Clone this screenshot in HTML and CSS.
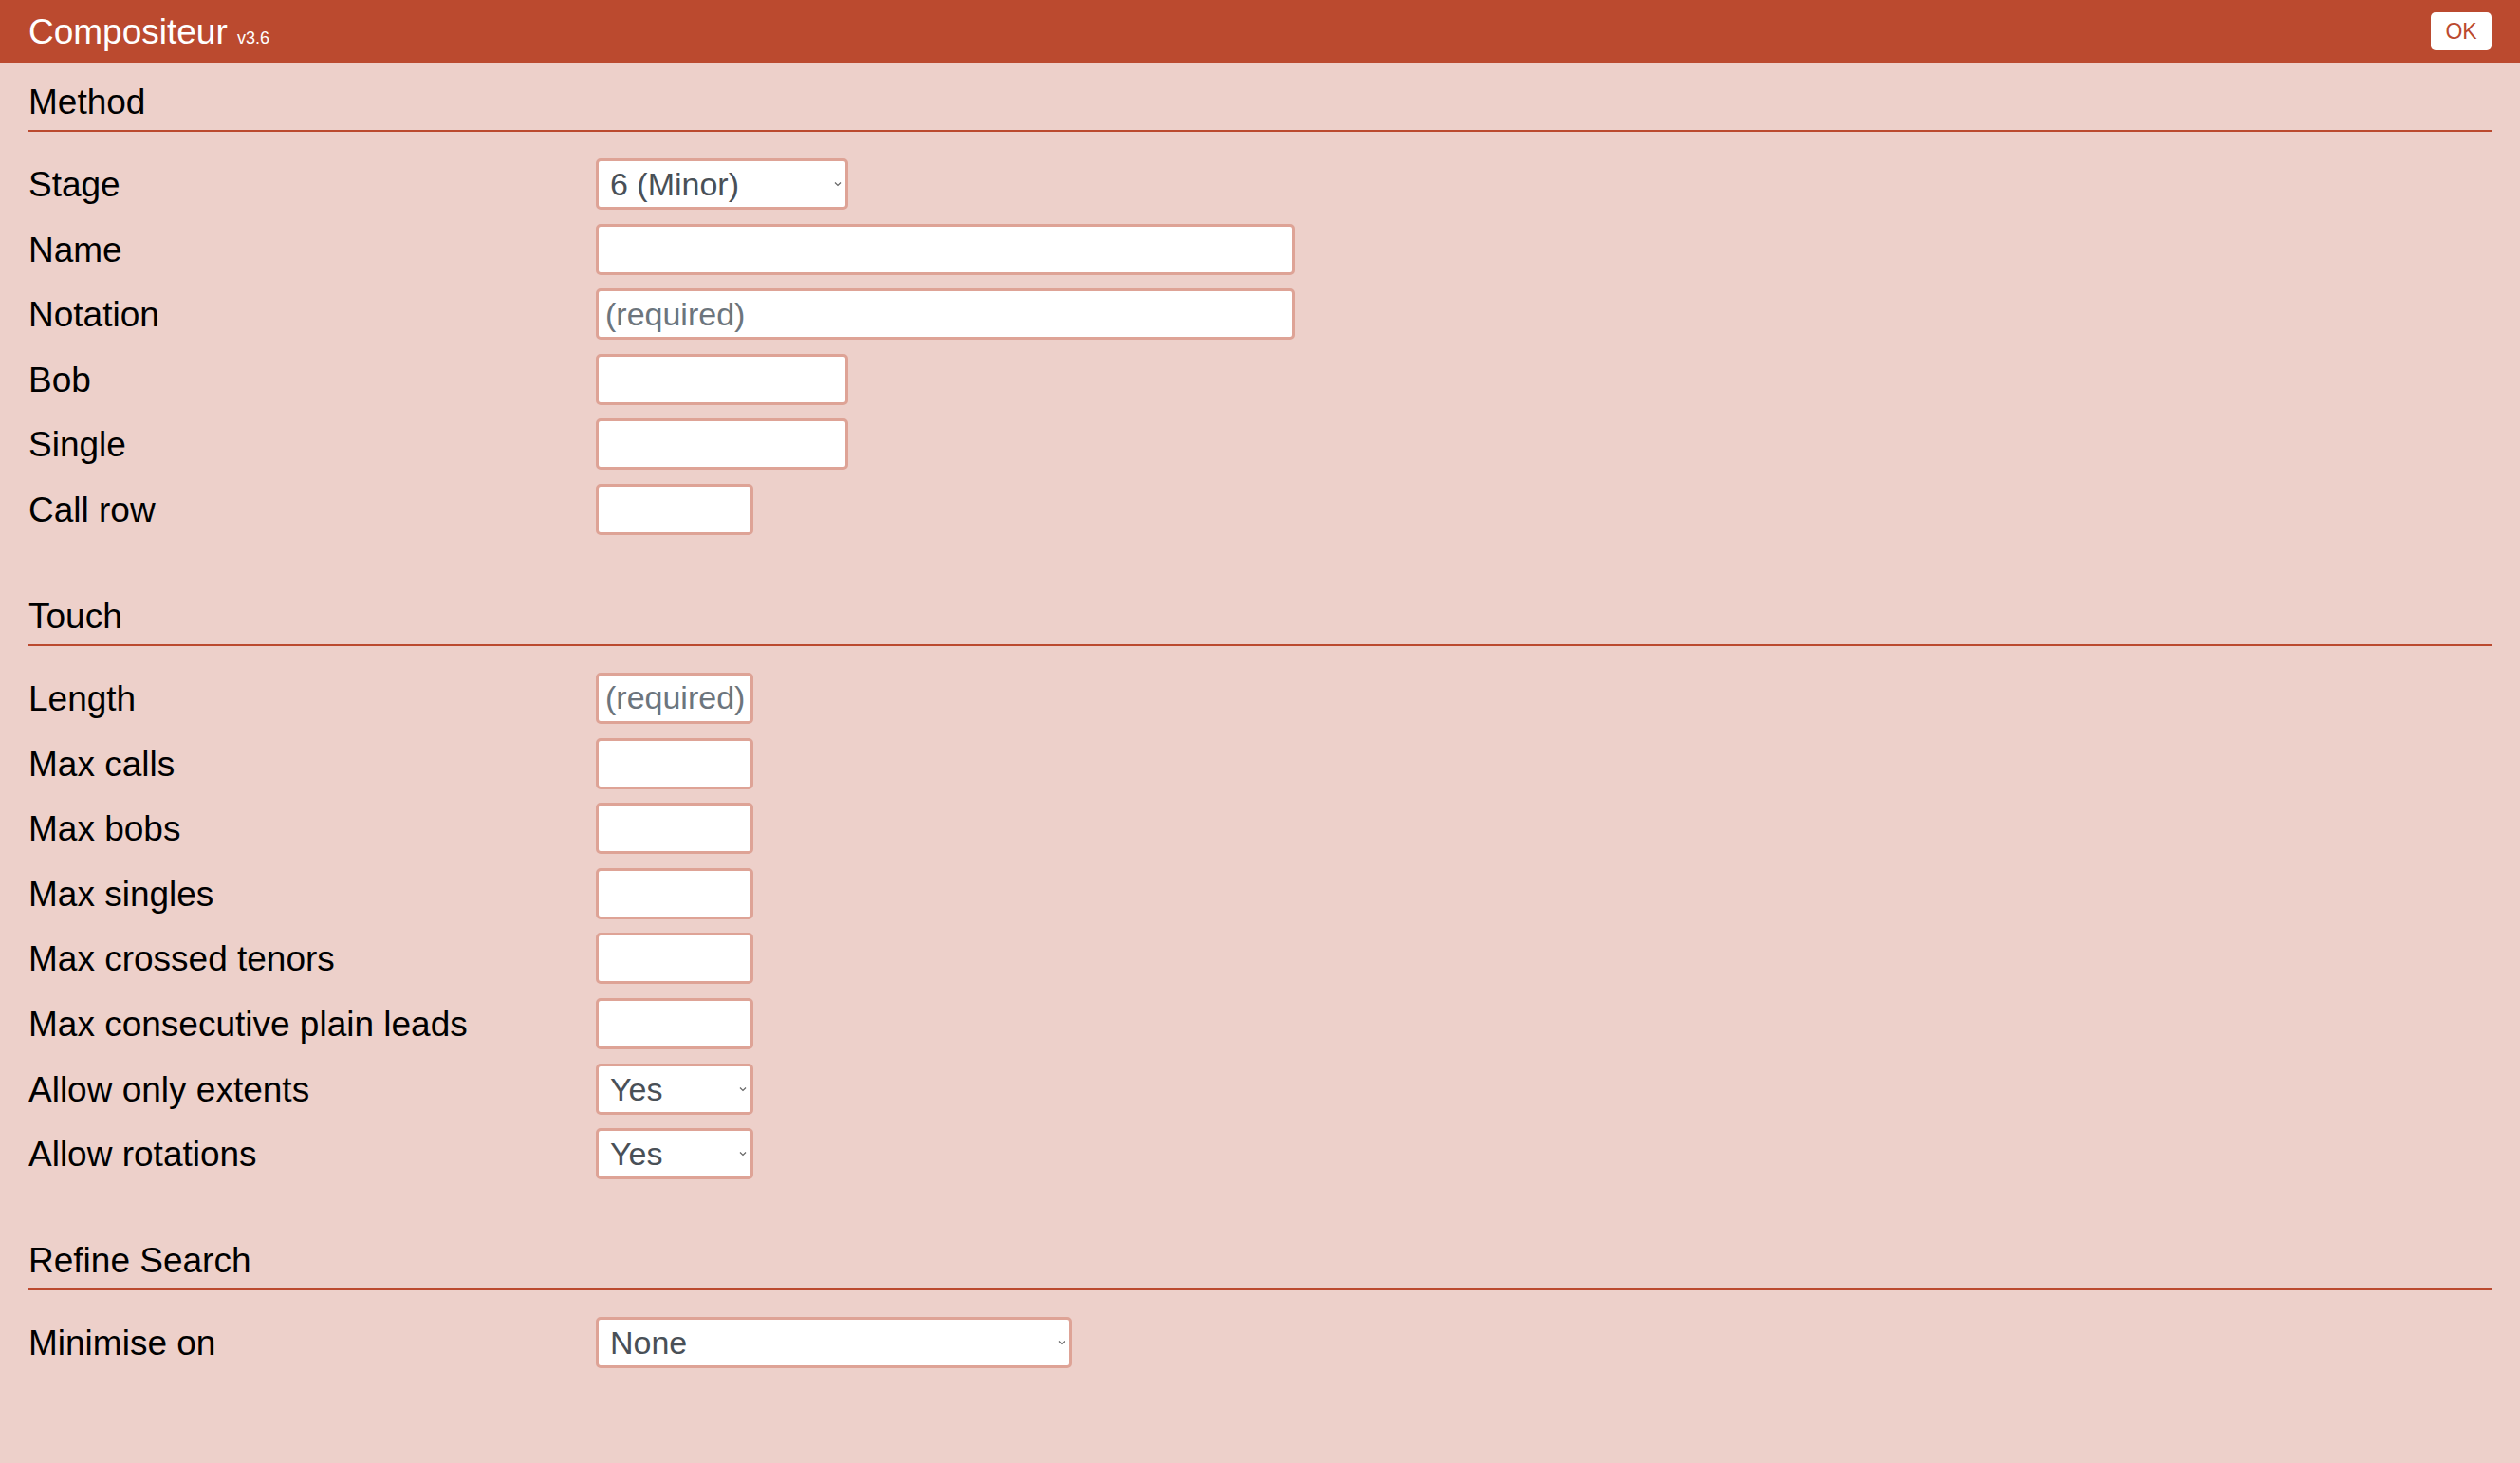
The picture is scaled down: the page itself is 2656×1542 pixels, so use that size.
FILE: index.html
```html
<!DOCTYPE html>
<html lang="en">
<head>
    <meta charset="UTF-8">
    <title>Compositeur</title>
    <link rel="stylesheet" href="styles.css">
</head>
<body>
    <header class="topbar">
        <h1 class="title">Compositeur <small>v3.6</small></h1>
        <button class="ok-btn">OK</button>
    </header>
    <main class="settings">
        <section class="group">
            <h2>Method</h2>
            <div class="fields">
                <label class="field"><span>Stage</span>
                    <select class="w-md">
                        <option>6 (Minor)</option>
                    </select>
                </label>
                <label class="field"><span>Name</span><input type="text" class="w-lg"></label>
                <label class="field"><span>Notation</span><input type="text" class="w-lg" placeholder="(required)"></label>
                <label class="field"><span>Bob</span><input type="text" class="w-md"></label>
                <label class="field"><span>Single</span><input type="text" class="w-md"></label>
                <label class="field"><span>Call row</span><input type="text" class="w-sm"></label>
            </div>
        </section>
        <section class="group">
            <h2>Touch</h2>
            <div class="fields">
                <label class="field"><span>Length</span><input type="text" class="w-sm" placeholder="(required)"></label>
                <label class="field"><span>Max calls</span><input type="text" class="w-sm"></label>
                <label class="field"><span>Max bobs</span><input type="text" class="w-sm"></label>
                <label class="field"><span>Max singles</span><input type="text" class="w-sm"></label>
                <label class="field"><span>Max crossed tenors</span><input type="text" class="w-sm"></label>
                <label class="field"><span>Max consecutive plain leads</span><input type="text" class="w-sm"></label>
                <label class="field"><span>Allow only extents</span>
                    <select class="w-sm">
                        <option>Yes</option>
                        <option>No</option>
                    </select>
                </label>
                <label class="field"><span>Allow rotations</span>
                    <select class="w-sm">
                        <option>Yes</option>
                        <option>No</option>
                    </select>
                </label>
            </div>
        </section>
        <section class="group">
            <h2>Refine Search</h2>
            <div class="fields">
                <label class="field"><span>Minimise on</span>
                    <select class="w-xl">
                        <option>None</option>
                    </select>
                </label>
            </div>
        </section>
    </main>
</body>
</html>
```

FILE: styles.css
```css
body {
    margin: 0;
    padding: 0;
    background-color: #edd0ca;
    color: #000;
    font-family: "Liberation Sans", Arial, sans-serif;
}
.topbar {
    background-color: #bb4a2f;
    height: 66px;
    padding: 0 30px;
    display: flex;
    justify-content: space-between;
    align-items: center;
}
.title {
    margin: 0;
    padding-top: 7px;
    color: white;
    font-size: 37px;
    font-weight: normal;
    line-height: 44px;
}
.title small {
    font-size: 18px;
}
.ok-btn {
    width: 64px;
    height: 40px;
    padding: 0;
    border: none;
    border-radius: 5px;
    background-color: white;
    color: #bb4a2f;
    font-family: "Liberation Sans", Arial, sans-serif;
    font-size: 23px;
    cursor: pointer;
}
.settings {
    padding: 0 30px;
}
.group h2 {
    margin: 64px 0 28px;
    padding-bottom: 7px;
    border-bottom: 2px solid #bb4a2f;
    font-size: 37px;
    font-weight: normal;
    line-height: 44px;
}
.group:first-child h2 {
    margin-top: 20px;
}
.fields {
    display: flex;
    flex-direction: column;
    gap: 14.6px;
}
.field {
    display: grid;
    grid-template-columns: 598px auto;
    align-items: center;
    font-size: 37px;
}
.field span {
    padding-top: 2px;
}
.field input,
.field select {
    box-sizing: border-box;
    height: 54px;
    margin: 0;
    padding: 0 7px;
    border: 3px solid #dea396;
    border-radius: 5px;
    background-color: white;
    color: #495057;
    font-family: "Liberation Sans", Arial, sans-serif;
    font-size: 34px;
    outline: none;
}
.field input::placeholder {
    color: #6c757d;
}
.field select {
    appearance: none;
    -webkit-appearance: none;
    padding-left: 12px;
    background-image: url("data:image/svg+xml;utf8,<svg xmlns='http://www.w3.org/2000/svg' width='8' height='6' viewBox='0 0 8 6'><path d='M1 1.5 L4 4.5 L7 1.5' fill='none' stroke='%23666' stroke-width='1.2'/></svg>");
    background-repeat: no-repeat;
    background-position: right 4px center;
    background-size: 8px 6px;
}
.w-sm { width: 166px; }
.w-md { width: 266px; }
.w-lg { width: 737px; }
.w-xl { width: 502px; }
```
